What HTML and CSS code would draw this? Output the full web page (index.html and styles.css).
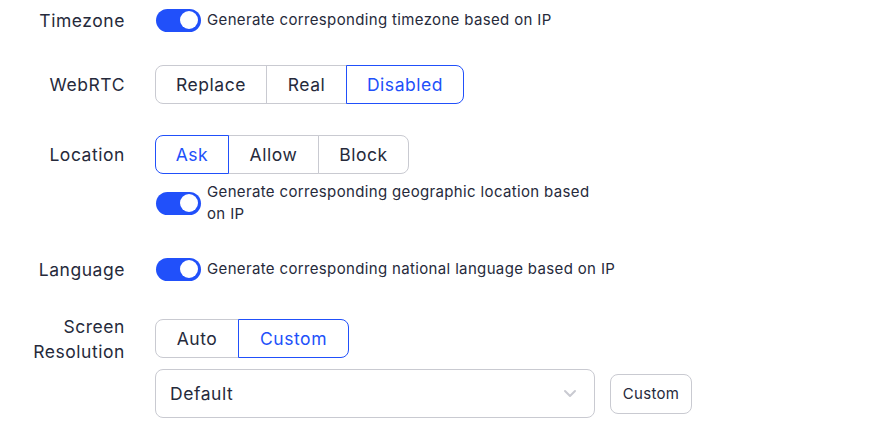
FILE: index.html
```html
<!DOCTYPE html>
<html>
<head>
<meta charset="utf-8">
<link rel="stylesheet" href="styles.css">
</head>
<body>
<div class="form">
  <div class="row row-tz">
    <div class="label">Timezone</div>
    <div class="control">
      <div class="switch-line"><span class="switch"><span class="knob"></span></span><span class="switch-text">Generate corresponding timezone based on IP</span></div>
    </div>
  </div>
  <div class="row row-rtc">
    <div class="label">WebRTC</div>
    <div class="control">
      <div class="seg">
        <span class="seg-btn w-replace">Replace</span><span class="seg-btn w-real">Real</span><span class="seg-btn active w-disabled">Disabled</span>
      </div>
    </div>
  </div>
  <div class="row row-loc">
    <div class="label">Location</div>
    <div class="control">
      <div class="seg">
        <span class="seg-btn active w-ask">Ask</span><span class="seg-btn w-allow">Allow</span><span class="seg-btn w-block">Block</span>
      </div>
      <div class="switch-line two"><span class="switch"><span class="knob"></span></span><span class="switch-text wrap">Generate corresponding geographic location based on IP</span></div>
    </div>
  </div>
  <div class="row row-lang">
    <div class="label">Language</div>
    <div class="control">
      <div class="switch-line"><span class="switch"><span class="knob"></span></span><span class="switch-text">Generate corresponding national language based on IP</span></div>
    </div>
  </div>
  <div class="row row-res">
    <div class="label two-line">Screen<br>Resolution</div>
    <div class="control">
      <div class="seg">
        <span class="seg-btn w-auto">Auto</span><span class="seg-btn active w-custom">Custom</span>
      </div>
      <div class="select-line">
        <div class="select"><span>Default</span>
          <svg class="chev" width="14" height="9" viewBox="0 0 14 9"><path d="M2 2 L7 7 L12 2" fill="none" stroke="#c9cad1" stroke-width="2" stroke-linecap="round" stroke-linejoin="round"/></svg>
        </div>
        <span class="small-btn">Custom</span>
      </div>
    </div>
  </div>
</div>
</body>
</html>
```
FILE: styles.css
```css
* { box-sizing: border-box; }
body {
  margin: 0;
  background: #fff;
  font-family: Inter, "Noto Sans", sans-serif;
  color: #262a3b;
}
.form { display: flex; flex-direction: column; }
.row {
  display: grid;
  grid-template-columns: 125px 1fr;
  column-gap: 30px;
}
.label {
  font-size: 17.5px;
  letter-spacing: 0.55px;
  text-align: right;
  display: flex;
  align-items: center;
  justify-content: flex-end;
  height: 40px;
  line-height: 25px;
}
.row-tz { height: 40px; margin-bottom: 25px; }
.row-rtc { margin-bottom: 31px; }
.row-rtc .label, .row-loc .label { height: 39px; }
.row-loc { margin-bottom: 24px; }
.row-lang { height: 40px; margin-bottom: 30px; }
.row-res .label { height: 40px; }
.control { display: flex; flex-direction: column; align-items: flex-start; }
.switch-line {
  display: flex;
  align-items: center;
  height: 40px;
}
.switch-line.two { height: auto; margin-top: 7px; }
.switch {
  width: 45px;
  height: 23px;
  border-radius: 12px;
  background: #2150fa;
  position: relative;
  flex: none;
  margin-left: 1px;
}
.knob {
  position: absolute;
  right: 3px;
  top: 2.5px;
  width: 18px;
  height: 18px;
  border-radius: 50%;
  background: #fff;
}
.switch-text {
  font-size: 15px;
  letter-spacing: 0.35px;
  margin-left: 6px;
  color: #262a3b;
  line-height: 22px;
}
.switch-text.wrap { width: 395px; }
.seg { display: flex; }
.seg-btn {
  height: 39px;
  display: flex;
  align-items: center;
  justify-content: center;
  font-size: 17.5px;
  letter-spacing: 0.55px;
  border: 1px solid #c9cad1;
  margin-left: -1px;
  color: #262a3b;
  background: #fff;
  position: relative;
}
.seg-btn:first-child { margin-left: 0; border-radius: 8px 0 0 8px; }
.seg-btn:last-child { border-radius: 0 8px 8px 0; }
.seg-btn.active { border-color: #2150fa; color: #2150fa; z-index: 1; }
.w-replace { width: 112px; }
.w-real { width: 81px; }
.w-disabled { width: 118px; }
.w-ask { width: 74px; }
.w-allow { width: 91px; }
.w-block { width: 91px; }
.w-auto { width: 84px; }
.w-custom { width: 111px; }
.select-line { display: flex; align-items: center; margin-top: 11px; }
.select {
  width: 440px;
  height: 49px;
  border: 1px solid #c9cad1;
  border-radius: 8px;
  display: flex;
  align-items: center;
  justify-content: space-between;
  padding: 0 17px 0 14px;
  font-size: 17.5px;
  letter-spacing: 0.55px;
}
.chev { display: block; }
.small-btn {
  margin-left: 15px;
  width: 82px;
  height: 40px;
  border: 1px solid #c9cad1;
  border-radius: 8px;
  display: flex;
  align-items: center;
  justify-content: center;
  font-size: 15px;
  letter-spacing: 0.35px;
}
```
